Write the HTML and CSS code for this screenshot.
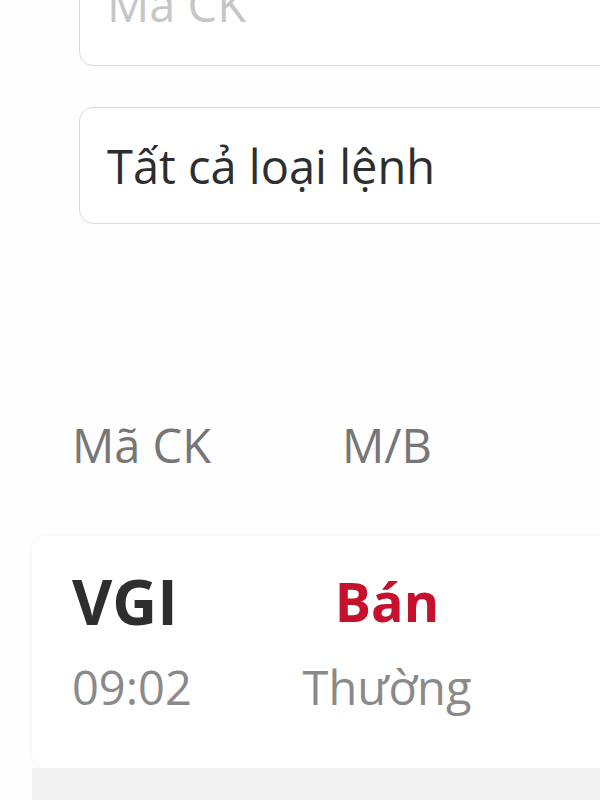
FILE: index.html
```html
<!DOCTYPE html>
<html lang="vi">
<head>
  <meta charset="UTF-8" />
  <meta name="viewport" content="width=device-width, initial-scale=1.0"/>
  <title>Sổ lệnh</title>
  <link rel="stylesheet" href="styles.css">
</head>
<body>
  <section class="filters">
    <div class="filter-box">
      <span class="placeholder">Mã CK</span>
    </div>
    <div class="filter-box">
      <span class="value">Tất cả loại lệnh</span>
    </div>
  </section>

  <div class="list-head">
    <span>Mã CK</span>
    <span class="center">M/B</span>
  </div>

  <div class="order-card">
    <span class="symbol">VGI</span>
    <span class="side sell">Bán</span>
    <span class="time">09:02</span>
    <span class="type">Thường</span>
  </div>
  <div class="order-card next"></div>
</body>
</html>
```

FILE: styles.css
```css
:root {
  --vien: #dadada;
  --chu-dam: #2e2e2e;
  --chu-xam: #8a8a8a;
  --do-ban: #c5102e;
  --nen-xam: #f3f3f3;
}

* {
  margin: 0;
  padding: 0;
  box-sizing: border-box;
}

html, body {
  height: 100%;
}

body {
  background-color: #fefefe;
  font-family: 'Open Sans', 'Noto Sans', sans-serif;
  overflow: hidden;
  width: 600px;
}

.filters {
  display: flex;
  flex-direction: column;
  gap: 41px;
  margin-top: -51px;
  padding-left: 79px;
}

.filter-box {
  width: 560px;
  height: 117px;
  border: 1.5px solid var(--vien);
  border-radius: 14px;
  display: flex;
  align-items: center;
  padding-left: 27px;
  font-size: 47px;
  background: #fff;
}

.filter-box .placeholder {
  color: #c6c6c6;
  position: relative;
  top: -4px;
}

.filter-box .value {
  color: var(--chu-dam);
}

.list-head {
  display: grid;
  grid-template-columns: 200px 230px;
  padding-left: 72px;
  margin-top: 191px;
  font-size: 47px;
  line-height: 60px;
  color: #767676;
}

.center {
  text-align: center;
}

.order-card {
  display: grid;
  grid-template-columns: 200px 230px;
  row-gap: 23px;
  margin-top: 61px;
  margin-left: 32px;
  width: 600px;
  padding: 30px 0 53px 40px;
  background: #fff;
  border-radius: 14px 0 0 14px;
  box-shadow: 0 0 5px rgba(0, 0, 0, 0.07);
}

.order-card.next {
  margin-top: 0;
  height: 60px;
  padding: 0;
  background: var(--nen-xam);
  box-shadow: none;
  border-radius: 0;
}

.symbol {
  font-size: 62px;
  line-height: 70px;
  font-weight: bold;
  color: var(--chu-dam);
}

.side {
  font-size: 54px;
  line-height: 70px;
  font-weight: bold;
  text-align: center;
}

.side.sell {
  color: var(--do-ban);
}

.time, .type {
  font-size: 47px;
  line-height: 56px;
  color: var(--chu-xam);
}

.type {
  text-align: center;
}
```
